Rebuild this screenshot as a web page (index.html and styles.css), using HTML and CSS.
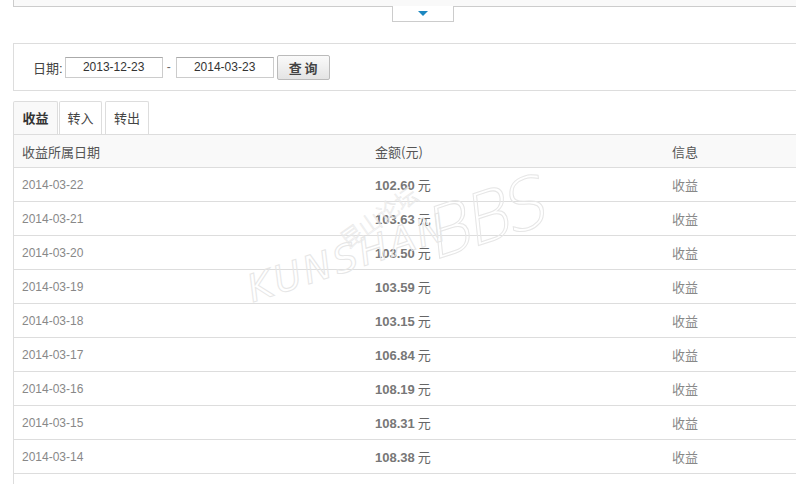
FILE: index.html
```html
<!DOCTYPE html>
<html>

<head>
    <!-- Earnings records -->
    <title>收益记录</title>
    <link rel="stylesheet" href="styles.css">
</head>

<body>
    <div class="page">
        <div class="top-box"></div>
        <div class="toggle"><span class="arrow"></span></div>

        <div class="filter-box">
            <span class="label">日期:</span>
            <input type="text" class="date-input" value="2013-12-23">
            <span class="dash">-</span>
            <input type="text" class="date-input" value="2014-03-23">
            <button class="query-btn">查 询</button>
        </div>

        <div class="tabs">
            <div class="tab active">收益</div>
            <div class="tab tab-in">转入</div>
            <div class="tab tab-out">转出</div>
        </div>

        <div class="records">
            <div class="row head">
                <div class="cell">收益所属日期</div>
                <div class="cell">金额(元)</div>
                <div class="cell">信息</div>
            </div>
            <div class="row">
                <div class="cell date">2014-03-22</div>
                <div class="cell amount"><b>102.60</b> 元</div>
                <div class="cell info">收益</div>
            </div>
            <div class="row">
                <div class="cell date">2014-03-21</div>
                <div class="cell amount"><b>103.63</b> 元</div>
                <div class="cell info">收益</div>
            </div>
            <div class="row">
                <div class="cell date">2014-03-20</div>
                <div class="cell amount"><b>103.50</b> 元</div>
                <div class="cell info">收益</div>
            </div>
            <div class="row">
                <div class="cell date">2014-03-19</div>
                <div class="cell amount"><b>103.59</b> 元</div>
                <div class="cell info">收益</div>
            </div>
            <div class="row">
                <div class="cell date">2014-03-18</div>
                <div class="cell amount"><b>103.15</b> 元</div>
                <div class="cell info">收益</div>
            </div>
            <div class="row">
                <div class="cell date">2014-03-17</div>
                <div class="cell amount"><b>106.84</b> 元</div>
                <div class="cell info">收益</div>
            </div>
            <div class="row">
                <div class="cell date">2014-03-16</div>
                <div class="cell amount"><b>108.19</b> 元</div>
                <div class="cell info">收益</div>
            </div>
            <div class="row">
                <div class="cell date">2014-03-15</div>
                <div class="cell amount"><b>108.31</b> 元</div>
                <div class="cell info">收益</div>
            </div>
            <div class="row">
                <div class="cell date">2014-03-14</div>
                <div class="cell amount"><b>108.38</b> 元</div>
                <div class="cell info">收益</div>
            </div>
            <div class="row"></div>
        </div>

        <!-- forum watermark over the table -->
        <div class="watermark">
            <span class="wm-en">KUNSHAN</span>
            <span class="wm-cn">昆山论坛</span>
            <span class="wm-bbs">BBS</span>
        </div>
    </div>
</body>

</html>
```

FILE: styles.css
```css
* {
    margin: 0px;
    box-sizing: border-box;
}

html,
body {
    overflow: hidden;
}

body {
    background-color: white;
    font-family: "Liberation Sans", "Noto Sans CJK SC", sans-serif;
    font-size: 12px;
    color: #555;
}

.page {
    position: relative;
    margin-left: 13px;
    width: 819px;
}

.top-box {
    height: 7px;
    background-color: #f9f9f9;
    border-left: 1px solid #ccc;
    border-bottom: 1px solid #ccc;
}

.toggle {
    width: 62px;
    height: 16px;
    margin: -1px auto 0;
    background-color: white;
    border: 1px solid #ccc;
    border-top: none;
    display: flex;
    justify-content: center;
    align-items: center;
}

.arrow {
    width: 0;
    height: 0;
    border-left: 5px solid transparent;
    border-right: 5px solid transparent;
    border-top: 5px solid #1c87c0;
    margin-top: -1px;
}

.filter-box {
    margin-top: 21px;
    height: 48px;
    border: 1px solid #ddd;
    border-right: none;
    display: flex;
    align-items: center;
    padding-left: 19px;
}

.label {
    font-size: 13px;
    margin-right: 2px;
    color: #444;
}

.date-input {
    width: 98px;
    height: 21px;
    border: 1px solid #ccc;
    border-top-color: #aaa;
    text-align: center;
    font-family: "Liberation Sans", sans-serif;
    font-size: 12px;
    color: #333;
    padding: 0;
}

.dash {
    margin: 0 5px 0 4px;
    color: #666;
}

.query-btn {
    margin-left: 3px;
    width: 53px;
    height: 25px;
    border: 1px solid #bbb;
    border-radius: 2px;
    background: linear-gradient(#fafafa, #e4e4e4);
    font-family: "Noto Sans CJK SC", sans-serif;
    font-weight: bold;
    font-size: 13px;
    color: #444;
    padding: 0;
}

.tabs {
    margin-top: 10px;
    display: flex;
    height: 33px;
}

.tab {
    width: 44px;
    height: 33px;
    border: 1px solid #ddd;
    border-bottom: none;
    border-radius: 2px 2px 0 0;
    text-align: center;
    font-family: "Noto Sans CJK SC", sans-serif;
    font-size: 13px;
    color: #444;
    line-height: 32px;
}

.tab.active {
    width: 45px;
    font-weight: bold;
    color: #333;
    background-color: #f9f9f9;
}

.tab-in {
    width: 43px;
    margin-left: 1px;
}

.tab-out {
    margin-left: 3px;
}

.records {
    border-left: 1px solid #ddd;
    border-top: 1px solid #ddd;
}

.row {
    display: grid;
    grid-template-columns: 353px 297px 1fr;
    height: 34px;
    border-bottom: 1px solid #ddd;
    align-items: center;
}

.row.head {
    height: 33px;
    background-color: #f9f9f9;
}

.cell {
    padding-left: 8px;
}

.head .cell {
    font-family: "Noto Sans CJK SC", sans-serif;
    font-size: 13px;
    color: #555;
}

.date {
    color: #888;
}

.amount {
    font-family: "Noto Sans CJK SC", sans-serif;
    font-size: 13px;
    color: #666;
}

.amount b {
    font-family: "Liberation Sans", sans-serif;
    color: #777;
}

.info {
    font-family: "Noto Sans CJK SC", sans-serif;
    font-size: 13px;
    color: #888;
}

.watermark {
    position: absolute;
    left: 225px;
    top: 170px;
    width: 340px;
    height: 150px;
    pointer-events: none;
}

.wm-en {
    position: absolute;
    left: 17px;
    top: 98px;
    transform: rotate(-18deg);
    transform-origin: left bottom;
    font-family: "DejaVu Sans", sans-serif;
    font-style: italic;
    font-size: 38px;
    letter-spacing: 3px;
    line-height: 42px;
    color: transparent;
    -webkit-text-stroke: 1px #e6e6e6;
}

.wm-cn {
    position: absolute;
    left: 96px;
    top: 30px;
    transform: rotate(-35deg);
    font-family: "Noto Sans CJK SC", sans-serif;
    font-weight: 300;
    font-size: 22px;
    color: transparent;
    -webkit-text-stroke: 0.6px #e8e8e8;
}

.wm-bbs {
    position: absolute;
    left: 188px;
    top: 12px;
    transform: rotate(-18deg) skewX(-12deg);
    font-family: "DejaVu Sans", sans-serif;
    font-weight: 200;
    font-size: 70px;
    letter-spacing: -5px;
    line-height: 72px;
    color: transparent;
    -webkit-text-stroke: 1px #e6e6e6;
}
```
